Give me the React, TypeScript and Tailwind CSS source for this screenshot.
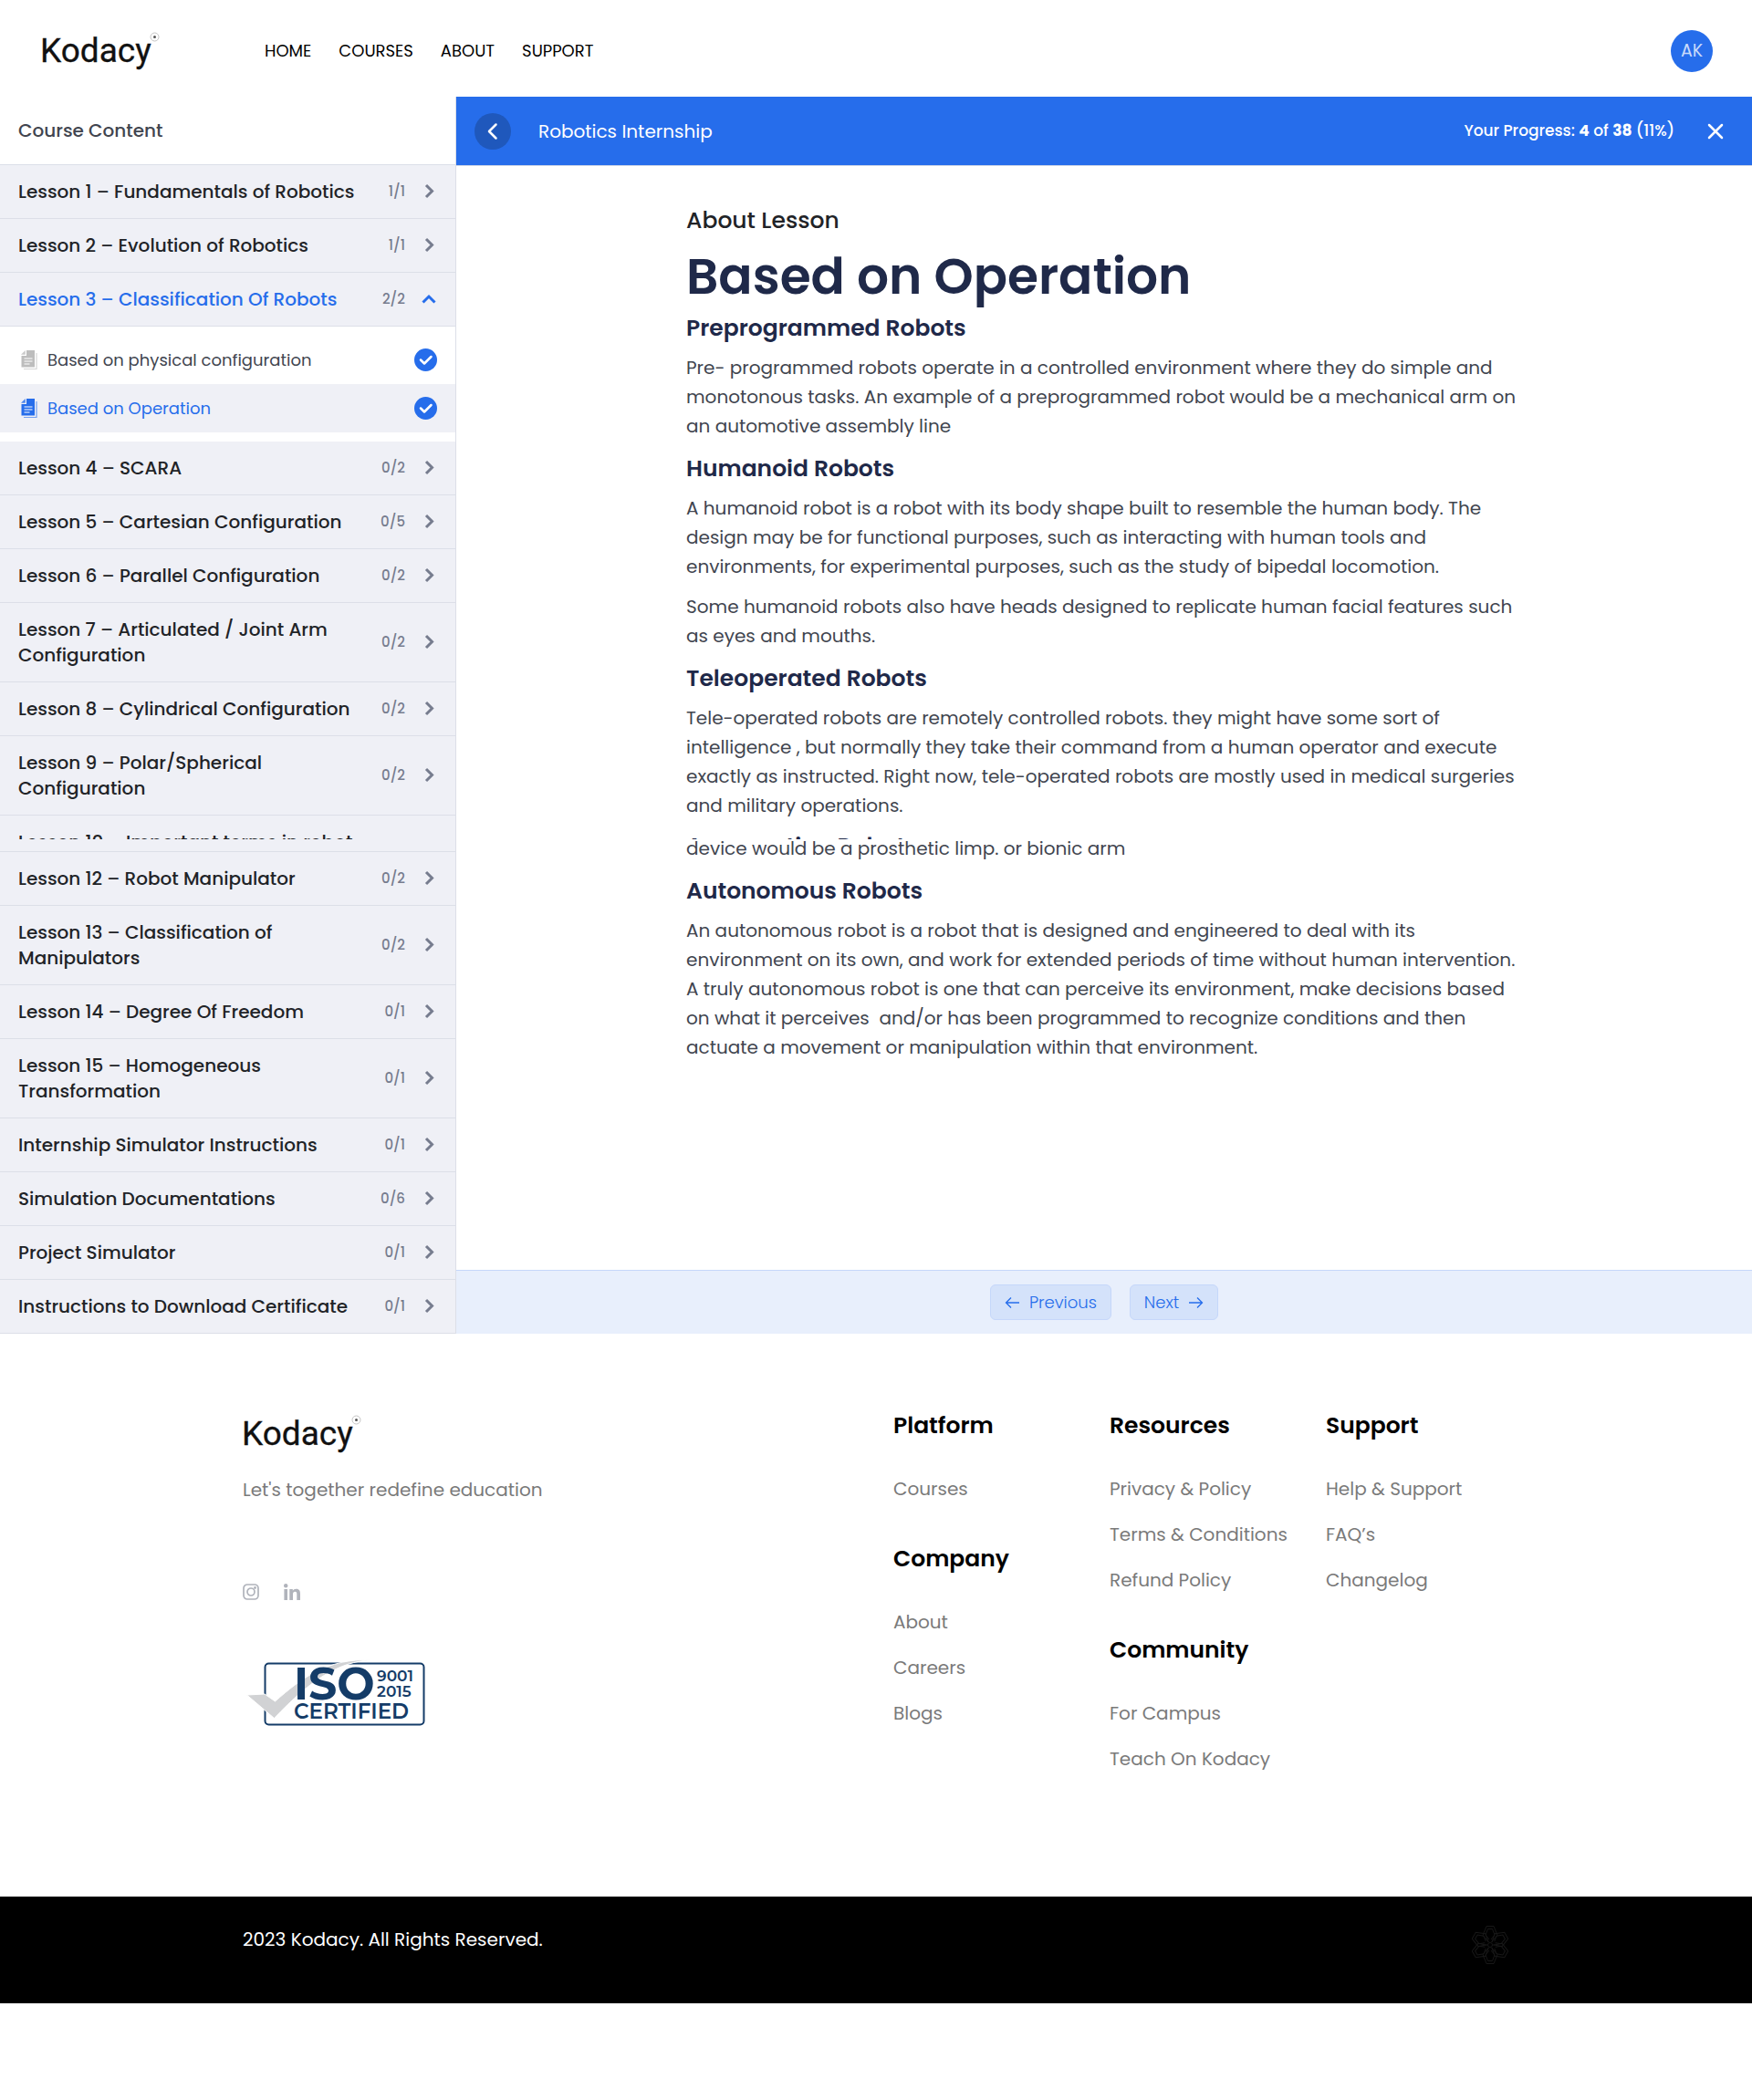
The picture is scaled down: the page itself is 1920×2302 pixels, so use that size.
import React from "react";

type Lesson = { title: string; count: string; open?: boolean };

const firstLessons: Lesson[] = [
  { title: "Lesson 1 – Fundamentals of Robotics", count: "1/1" },
  { title: "Lesson 2 – Evolution of Robotics", count: "1/1" },
  { title: "Lesson 3 – Classification Of Robots", count: "2/2", open: true },
];

const middleLessons: Lesson[] = [
  { title: "Lesson 4 – SCARA", count: "0/2" },
  { title: "Lesson 5 – Cartesian Configuration", count: "0/5" },
  { title: "Lesson 6 – Parallel Configuration", count: "0/2" },
  { title: "Lesson 7 – Articulated / Joint Arm\nConfiguration", count: "0/2" },
  { title: "Lesson 8 – Cylindrical Configuration", count: "0/2" },
  { title: "Lesson 9 – Polar/Spherical\nConfiguration", count: "0/2" },
];

const lastLessons: Lesson[] = [
  { title: "Lesson 12 – Robot Manipulator", count: "0/2" },
  { title: "Lesson 13 – Classification of\nManipulators", count: "0/2" },
  { title: "Lesson 14 – Degree Of Freedom", count: "0/1" },
  { title: "Lesson 15 – Homogeneous\nTransformation", count: "0/1" },
  { title: "Internship Simulator Instructions", count: "0/1" },
  { title: "Simulation Documentations", count: "0/6" },
  { title: "Project Simulator", count: "0/1" },
  { title: "Instructions to Download Certificate", count: "0/1" },
];

function Logo() {
  return (
    <svg width="130" height="42" viewBox="0 0 130 42" role="img" aria-label="Kodacy">
      <text x="-1" y="33" fontFamily="Roboto, sans-serif" fontSize="37" fontWeight="400" fill="#111" stroke="#111" strokeWidth=".3">
        Kodacy
      </text>
      <circle cx="124.500" cy="5.500" r="4.500" fill="none" stroke="#c4c4c4" strokeWidth="1" />
      <circle cx="124.500" cy="5.500" r="1.500" fill="#555" />
    </svg>
  );
}

function Chevron({ open }: { open?: boolean }) {
  return (
    <svg width="18" height="18" viewBox="0 0 18 18" fill="none" strokeWidth="3" className={open ? "text-[#266deb]" : "text-[#767c8e]"}>
      <path d={open ? "M2.500 12.500 9 6l6.500 6.500" : "M6 2 12.500 8.500 6 15"} stroke="currentColor" />
    </svg>
  );
}

function LessonRow({ title, count, open }: Lesson) {
  return (
    <button
      type="button"
      aria-expanded={!!open}
      className="flex w-full items-center border-b border-[#dcdfe8] bg-[#eff0f6] py-[15px] pr-5 pl-5 text-left"
    >
      <span className={`flex-1 whitespace-pre-line text-xl leading-7 font-medium ${open ? "text-[#266deb]" : "text-[#212327]"}`}>{title}</span>
      <span className="mr-[17px] text-[15px] font-medium text-[#767c8e]">{count}</span>
      <Chevron open={open} />
    </button>
  );
}

function DocIcon() {
  return (
    <svg width="18" height="22" viewBox="0 0 18 22" fill="none">
      <path d="M3 20.500h14V3" stroke="currentColor" strokeWidth="1.200" opacity=".6" />
      <path d="M6 0h9v18.500H.500V6H6z" fill="currentColor" />
      <path d="M4.800 0v4.800H0z" fill="currentColor" opacity=".8" />
      <path d="M3.500 9h9M3.500 12h9M3.500 15h6" stroke="#fff" strokeWidth="1.200" />
    </svg>
  );
}

function Topic({ title, active }: { title: string; active?: boolean }) {
  return (
    <a href="#" className={`flex h-[53px] items-center px-5 ${active ? "bg-[#eff0f6]" : "bg-white"}`}>
      <span className={`ml-[3px] ${active ? "text-[#266deb]" : "text-[#bdbdbd]"}`}>
        <DocIcon />
      </span>
      <span className={`ml-[11px] flex-1 text-lg leading-6 ${active ? "text-[#266deb]" : "text-[#41454f]"}`}>{title}</span>
      <svg width="25" height="25" viewBox="0 0 25 25">
        <circle cx="12.500" cy="12.500" r="12.500" fill="#266deb" />
        <path d="m7 12.500 4 4 7.500-7.500" fill="none" stroke="#fff" strokeWidth="2.500" strokeLinecap="round" strokeLinejoin="round" />
      </svg>
    </a>
  );
}

function Heading({ children }: { children: React.ReactNode }) {
  return <h3 className="mb-[9px] pt-px text-[25px] leading-9 font-semibold text-[#1f2949]">{children}</h3>;
}

function Para({ lines }: { lines: string[] }) {
  return (
    <p className="mb-3 text-xl leading-8 whitespace-pre-line text-[#41454f]">{lines.join("\n")}</p>
  );
}

function FooterGroup({ title, links }: { title: string; links: string[] }) {
  return (
    <section className="mb-[41px]">
      <h4 className="mb-[33px] text-[25px] leading-9 font-semibold text-black">{title}</h4>
      <ul>
        {links.map((l) => (
          <li key={l} className="mb-[14px] text-xl leading-9 whitespace-nowrap text-[#7a7a7a]">
            <a href="#">{l}</a>
          </li>
        ))}
      </ul>
    </section>
  );
}

function IsoBadge() {
  return (
    <svg width="196" height="76" viewBox="0 0 196 76" role="img" aria-label="ISO 9001 2015 certified" fontFamily="Montserrat, Poppins, sans-serif" fill="#143c68">
      <rect x="20.500" y="5.500" width="174" height="67" rx="4" fill="#fff" stroke="#143c68" strokeWidth="2" />
      <path d="M.5 40 20 39 31.500 47C60 22 88 0 137 1.500 101 4 72 22 30.500 65.500z" fill="#d1d2d4" stroke="#fff" strokeWidth="1" />
      <text x="52" y="45" fontSize="49" fontWeight="700">ISO</text>
      <text x="143" y="25" fontSize="17" fontWeight="600">9001</text>
      <text x="143" y="42" fontSize="17" fontWeight="600">2015</text>
      <text x="52" y="66" fontSize="23" fontWeight="600">CERTIFIED</text>
    </svg>
  );
}

function Flower() {
  return (
    <svg width="40" height="44" viewBox="-20 -22 40 44" fill="none" stroke="#181818" strokeWidth="1">
      {[0, 60, 120, 180, 240, 300].map((a) => (
        <g key={a} transform={`rotate(${a})`}>
          <path d="M-1.500-3-8-10.500-4-20.500H4L8-10.500 1.500-3" />
          <path d="M-1-6-5-11-2.500-17.500H2.500L5-11 1-6" />
        </g>
      ))}
      <circle r="2.500" />
    </svg>
  );
}

export default function App() {
  return (
    <div className="min-h-screen bg-white font-['Poppins',sans-serif]">
      <header className="flex h-[106px] items-center pt-[6px] pr-[43px] pb-0 pl-[45px]">
        <a href="#" aria-label="Kodacy home">
          <Logo />
        </a>
        <nav className="ml-[115px] flex flex-1 gap-[30px] text-lg leading-6 text-black">
          {["HOME", "COURSES", "ABOUT", "SUPPORT"].map((n) => (
            <a key={n} href="#">{n}</a>
          ))}
        </nav>
        <button type="button" className="flex size-[46px] items-center justify-center rounded-full bg-[#266deb] text-[19px] text-[#c9dafa]">
          AK
        </button>
      </header>

      <div className="flex">
        <aside className="w-[500px] shrink-0 border-r border-[#dcdfe8]">
          <h2 className="border-b border-[#dcdfe8] px-5 py-[22px] text-xl leading-[30px] font-medium text-[#41454f]">Course Content</h2>
          {firstLessons.map((l) => (
            <LessonRow key={l.title} {...l} />
          ))}
          <div className="py-[10px]">
            <Topic title="Based on physical configuration" />
            <Topic title="Based on Operation" active />
          </div>
          {middleLessons.map((l) => (
            <LessonRow key={l.title} {...l} />
          ))}
          <div className="border-b border-[#dcdfe8] bg-[#eff0f6] pb-[13px]">
            <div className="h-[26px] overflow-hidden pt-[15px] pl-5 text-xl leading-7 font-medium text-[#212327]">
              Lesson 10 – Important terms in robot
            </div>
          </div>
          {lastLessons.map((l) => (
            <LessonRow key={l.title} {...l} />
          ))}
        </aside>

        <main className="flex flex-1 flex-col">
          <div className="flex h-[76px] items-center border-b border-[#cdd5e6] bg-[#266deb] px-5 text-white">
            <button type="button" aria-label="Back" className="flex size-10 items-center justify-center rounded-full bg-[#1f58bc]">
              <svg width="20" height="20" viewBox="0 0 20 20" fill="none" stroke="currentColor" strokeWidth="2.500" strokeLinecap="round" strokeLinejoin="round">
                <path d="M13.500 2.500 6 10l7.500 7.500" />
              </svg>
            </button>
            <span className="ml-[30px] flex-1 text-xl">Robotics Internship</span>
            <span className="text-[17px] font-medium">
              Your Progress: <b>4</b> of <b>38</b> (11%)
            </span>
            <button type="button" aria-label="Close" className="mr-[11px] ml-9">
              <svg width="18" height="18" viewBox="0 0 18 18" fill="none" stroke="currentColor" strokeWidth="2.500" strokeLinecap="round">
                <path d="m2 2 14 14M16 2 2 16" />
              </svg>
            </button>
          </div>

          <article className="mx-auto w-full max-w-[916px] flex-1 pt-[42px]">
            <h2 className="text-[25px] leading-9 font-medium text-[#212327]">About Lesson</h2>
            <h1 className="mt-2 mb-[3px] text-[55px] leading-[70px] font-semibold text-[#1f2949]">Based on Operation</h1>
            <Heading>Preprogrammed Robots</Heading>
            <Para
              lines={[
                "Pre- programmed robots operate in a controlled environment where they do simple and",
                "monotonous tasks. An example of a preprogrammed robot would be a mechanical arm on",
                "an automotive assembly line",
              ]}
            />
            <Heading>Humanoid Robots</Heading>
            <Para
              lines={[
                "A humanoid robot is a robot with its body shape built to resemble the human body. The",
                "design may be for functional purposes, such as interacting with human tools and",
                "environments, for experimental purposes, such as the study of bipedal locomotion.",
              ]}
            />
            <Para
              lines={[
                "Some humanoid robots also have heads designed to replicate human facial features such",
                "as eyes and mouths.",
              ]}
            />
            <Heading>Teleoperated Robots</Heading>
            <Para
              lines={[
                "Tele-operated robots are remotely controlled robots. they might have some sort of",
                "intelligence , but normally they take their command from a human operator and execute",
                "exactly as instructed. Right now, tele-operated robots are mostly used in medical surgeries",
                "and military operations.",
              ]}
            />
            <h3 className="-mb-[6px] h-[9px] overflow-hidden text-[25px] leading-[34px] font-semibold text-[#1f2949]">
              Augmenting Robots
            </h3>
            <Para lines={["device would be a prosthetic limp. or bionic arm"]} />
            <Heading>Autonomous Robots</Heading>
            <Para
              lines={[
                "An autonomous robot is a robot that is designed and engineered to deal with its",
                "environment on its own, and work for extended periods of time without human intervention.",
                "A truly autonomous robot is one that can perceive its environment, make decisions based",
                "on what it perceives\u00a0 and/or has been programmed to recognize conditions and then",
                "actuate a movement or manipulation within that environment.",
              ]}
            />
          </article>

          <div className="flex justify-center gap-5 border-t border-[#c5d7fa] bg-[#e8effc] py-[15px]">
            <button type="button" className="flex h-[39px] items-center gap-[11px] rounded-md border border-[#c5d7fa] bg-[#d4e2fa] px-[15px] text-lg font-light text-[#266deb]">
              <svg width="16" height="14" viewBox="0 0 16 14" fill="none" stroke="currentColor" strokeWidth="1.300">
                <path d="M16 7H1.500M7 1.500 1.500 7 7 12.500" />
              </svg>
              Previous
            </button>
            <button type="button" className="flex h-[39px] items-center gap-[11px] rounded-md border border-[#c5d7fa] bg-[#d4e2fa] px-[15px] text-lg font-light text-[#266deb]">
              Next
              <svg width="16" height="14" viewBox="0 0 16 14" fill="none" stroke="currentColor" strokeWidth="1.300">
                <path d="M0 7h14.500M9 1.500 14.500 7 9 12.500" />
              </svg>
            </button>
          </div>
        </main>
      </div>

      <footer>
        <div className="mx-auto grid max-w-[1426px] grid-cols-[713fr_237fr_237fr_201fr] px-[19px] pt-[83px] pb-[92px]">
          <div>
            <div className="pt-[6px]">
              <Logo />
            </div>
            <p className="mt-6 text-xl leading-8 text-[#7a7a7a]">Let's together redefine education</p>
            <div className="mt-[87px] flex items-center gap-[27px] text-[#b0b3bb]">
              <a href="#" aria-label="Instagram">
                <svg width="18" height="18" viewBox="0 0 18 18" fill="none" stroke="currentColor" strokeWidth="1.700">
                  <rect x="1" y="1" width="16" height="16" rx="4" />
                  <circle cx="9" cy="9" r="4" />
                  <circle cx="13.500" cy="4.500" r=".6" fill="currentColor" />
                </svg>
              </a>
              <a href="#" aria-label="LinkedIn">
                <svg width="18" height="18" viewBox="0 0 18 18" fill="currentColor">
                  <circle cx="2.200" cy="2.200" r="2.200" />
                  <path d="M.4 6H4v12H.4zM6.300 6h3.500v1.700C10.500 6.500 11.800 5.700 13.600 5.700c3.600 0 4.400 2.300 4.400 5.500V18h-3.700v-6c0-1.500 0-3.200-2-3.200S10 10.300 10 12v6H6.300z" />
                </svg>
              </a>
            </div>
            <div className="mt-[64px] pl-1">
              <IsoBadge />
            </div>
          </div>
          <div>
            <FooterGroup title="Platform" links={["Courses"]} />
            <FooterGroup title="Company" links={["About", "Careers", "Blogs"]} />
          </div>
          <div>
            <FooterGroup title="Resources" links={["Privacy & Policy", "Terms & Conditions", "Refund Policy"]} />
            <FooterGroup title="Community" links={["For Campus", "Teach On Kodacy"]} />
          </div>
          <div>
            <FooterGroup title="Support" links={["Help & Support", "FAQ’s", "Changelog"]} />
          </div>
        </div>
        <div className="bg-black">
          <div className="mx-auto flex max-w-[1426px] items-start justify-between px-[19px] pt-[31px] pb-[42px] text-white">
            <p className="text-xl leading-8">2023 Kodacy. All Rights Reserved.</p>
            <span className="mr-px">
              <Flower />
            </span>
          </div>
        </div>
      </footer>
    </div>
  );
}
